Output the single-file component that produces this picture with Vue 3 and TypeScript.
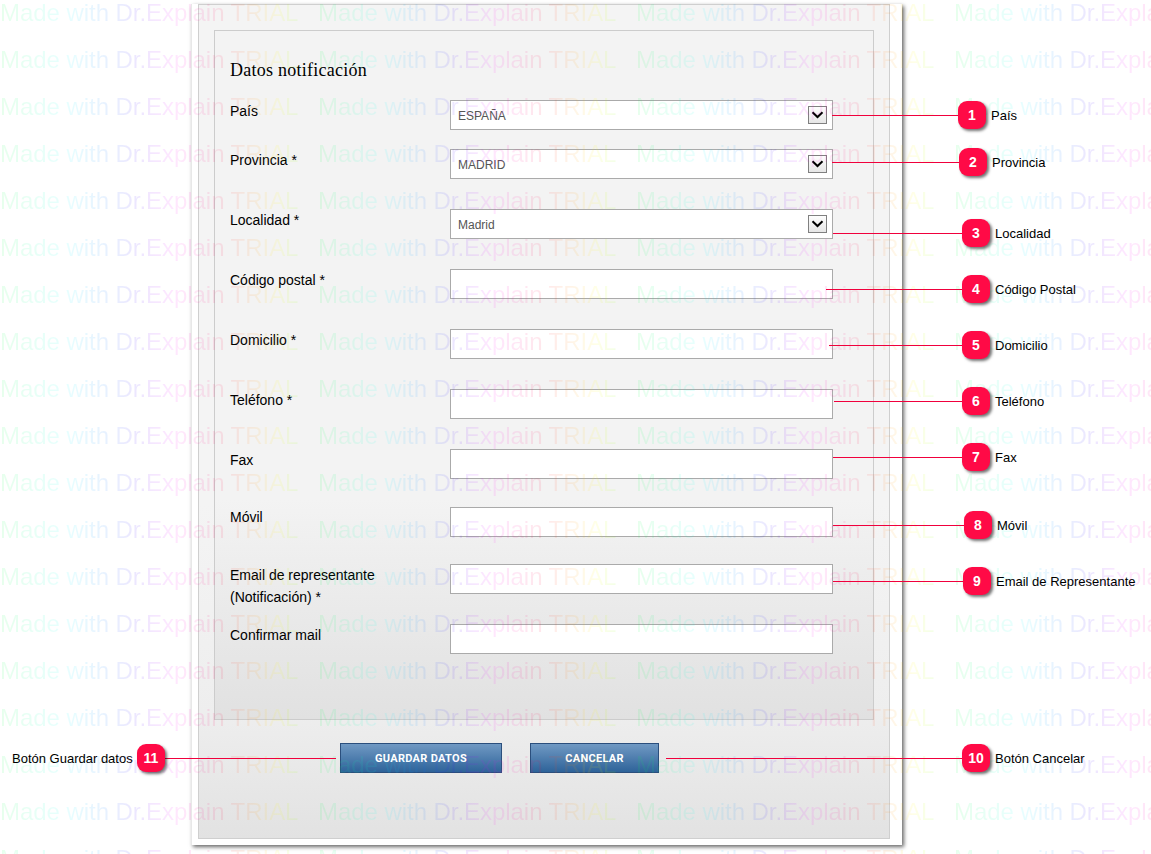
<script setup lang="ts">
const fields = [
  { label: 'País', kind: 'select', value: 'ESPAÑA', h: 49 },
  { label: 'Provincia *', kind: 'select', value: 'MADRID', h: 60 },
  { label: 'Localidad *', kind: 'select', value: 'Madrid', h: 60 },
  { label: 'Código postal *', kind: 'input', value: '', h: 60 },
  { label: 'Domicilio *', kind: 'input', value: '', h: 60 },
  { label: 'Teléfono *', kind: 'input', value: '', h: 60 },
  { label: 'Fax', kind: 'input', value: '', h: 58 },
  { label: 'Móvil', kind: 'input', value: '', h: 57 },
  { label: 'Email de representante (Notificación) *', kind: 'input', value: '', h: 60 },
  { label: 'Confirmar mail', kind: 'input', value: '', h: 30 },
]
const rowTemplate = fields.map((f) => f.h + 'px').join(' ')

const callouts = [
  { n: 1, text: 'País', x: 958, y: 101, from: 832, to: 958, ly: 115, lx: 991 },
  { n: 2, text: 'Provincia', x: 959, y: 148, from: 832, to: 959, ly: 162, lx: 992 },
  { n: 3, text: 'Localidad', x: 962, y: 219, from: 833, to: 962, ly: 233, lx: 995 },
  { n: 4, text: 'Código Postal', x: 962, y: 275, from: 826, to: 962, ly: 289, lx: 995 },
  { n: 5, text: 'Domicilio', x: 962, y: 331, from: 829, to: 962, ly: 345, lx: 995 },
  { n: 6, text: 'Teléfono', x: 962, y: 387, from: 834, to: 962, ly: 401, lx: 995 },
  { n: 7, text: 'Fax', x: 962, y: 443, from: 833, to: 962, ly: 457, lx: 995 },
  { n: 8, text: 'Móvil', x: 964, y: 511, from: 833, to: 964, ly: 525, lx: 997 },
  { n: 9, text: 'Email de Representante', x: 963, y: 567, from: 833, to: 963, ly: 581, lx: 996 },
  { n: 10, text: 'Botón Cancelar', x: 962, y: 744, from: 666, to: 962, ly: 758, lx: 995 },
  { n: 11, text: 'Botón Guardar datos', x: 137, y: 744, from: 165, to: 336, ly: 758, lx: 12 },
]
</script>

<template>
  <div class="page">
    <main class="card">
      <div class="panel">
        <section class="form">
          <h2 class="title">Datos notificación</h2>
          <div class="rows" :style="{ gridTemplateRows: rowTemplate }">
            <div v-for="f in fields" :key="f.label" class="row">
              <label class="label" :class="{ up: f.label === 'Móvil' }">{{ f.label }}</label>
              <div v-if="f.kind === 'select'" class="select">
                <span class="select-text">{{ f.value }}</span>
                <span class="arrow">
                  <svg width="13" height="8" viewBox="0 0 13 8">
                    <path d="M1.5 1.2 L6.5 6 L11.5 1.2" fill="none" stroke="#000" stroke-width="2" />
                  </svg>
                </span>
              </div>
              <input v-else class="input" type="text" />
            </div>
          </div>
        </section>
        <div class="actions">
          <button class="btn save">GUARDAR DATOS</button>
          <button class="btn cancel">CANCELAR</button>
        </div>
      </div>
    </main>

    <div class="watermark" aria-hidden="true">
      <template v-for="i in 76" :key="i">
        <span class="mark">Made with Dr.Explain TRIAL</span>
      </template>
    </div>

    <div class="callouts">
      <template v-for="c in callouts" :key="c.n">
        <div class="line" :style="{ left: c.from + 'px', width: c.to - c.from + 'px', top: c.ly + 'px' }"></div>
        <div class="badge" :style="{ left: c.x + 'px', top: c.y + 'px' }">{{ c.n }}</div>
        <div class="note" :style="{ left: c.lx + 'px', top: c.ly - 8 + 'px' }">{{ c.text }}</div>
      </template>
    </div>
  </div>
</template>

<style scoped>
.page {
  position: relative;
  width: 1151px;
  height: 854px;
  overflow: hidden;
  padding: 4px 0 0 191px;
  box-sizing: border-box;
  background: #fff;
  font-family: "Liberation Sans", Arial, sans-serif;
}
.card {
  width: 711px;
  height: 841px;
  box-sizing: border-box;
  padding: 0 12px 6px 6px;
  background: #fff;
  border-left: 1px solid #e8e8e8;
  box-shadow: 2px 2px 4px rgba(0, 0, 0, 0.6);
}
.panel {
  height: 100%;
  box-sizing: border-box;
  padding: 25px 15px 0;
  border: 1px solid #cfcfcf;
  background: linear-gradient(#f4f4f4 0, #f4f4f4 60%, #eeeeee 85%, #e2e2e2 100%);
}
.form {
  box-sizing: border-box;
  height: 690px;
  border: 1px solid #cccccc;
  padding: 0 15px;
  background: linear-gradient(#f3f3f3 0, #f3f3f3 68%, #e1e1e1 100%);
}
.title {
  margin: 0;
  height: 69px;
  padding-top: 29px;
  box-sizing: border-box;
  font-family: "Liberation Serif", "Times New Roman", serif;
  font-size: 18px;
  line-height: 21px;
  letter-spacing: 0.25px;
  font-weight: 400;
  color: #000;
}
.rows {
  display: grid;
}
.row {
  display: grid;
  grid-template-columns: 220px 383px;
  align-items: start;
}
.label {
  width: 170px;
  font-size: 14px;
  line-height: 22px;
  color: #000;
}
.label.up {
  margin-top: -1px;
}
.select,
.input {
  box-sizing: border-box;
  width: 383px;
  height: 30px;
  border: 1px solid #aaaaaa;
  background: #fff;
  margin: 0;
  padding: 0;
  outline: none;
  display: block;
}
.select {
  display: flex;
  align-items: center;
  justify-content: space-between;
  padding: 0 5px 0 7px;
}
.select-text {
  font-size: 12px;
  color: #555;
  padding-top: 2px;
}
.arrow {
  box-sizing: border-box;
  width: 19px;
  height: 18px;
  border: 1px solid #808080;
  background: linear-gradient(#fdfdfd, #e6e6e6);
  display: flex;
  align-items: center;
  justify-content: center;
}
.actions {
  display: flex;
  gap: 28px;
  padding: 23px 0 0 126px;
}
.btn {
  box-sizing: border-box;
  height: 30px;
  padding: 0;
  border: 1px solid #2b4f7d;
  background: linear-gradient(#7099c3, #2e6399);
  color: #ffffff;
  font-family: Roboto, "Liberation Sans", sans-serif;
  font-weight: 700;
  font-size: 11px;
  letter-spacing: 0.3px;
}
.save {
  width: 162px;
}
.cancel {
  width: 129px;
}
.watermark {
  position: absolute;
  left: 0;
  top: -11px;
  width: 1272px;
  display: grid;
  grid-template-columns: repeat(4, 318px);
  grid-auto-rows: 47px;
  pointer-events: none;
}
.mark {
  font-size: 24px;
  line-height: 47px;
  letter-spacing: -0.05px;
  white-space: nowrap;
  width: 299px;
  background: linear-gradient(90deg, #00ff40 0%, #00ffff 22%, #0080ff 34%, #4000ff 46%, #ff00ff 58%, #ff0040 74%, #ff8000 84%, #ffff00 93%, #80ff00 100%);
  -webkit-background-clip: text;
  background-clip: text;
  color: transparent;
  opacity: 0.09;
}
.callouts {
  position: absolute;
  inset: 0;
}
.line {
  position: absolute;
  height: 1px;
  background: #f0003c;
}
.badge {
  position: absolute;
  width: 28px;
  height: 28px;
  border-radius: 9px;
  background: #ff0a46;
  box-shadow: 2px 2px 3px rgba(0, 0, 0, 0.55);
  color: #fff;
  font-weight: 700;
  font-size: 14px;
  line-height: 28px;
  text-align: center;
}
.note {
  position: absolute;
  font-size: 13px;
  line-height: 18px;
  white-space: nowrap;
  color: #000;
}
</style>
